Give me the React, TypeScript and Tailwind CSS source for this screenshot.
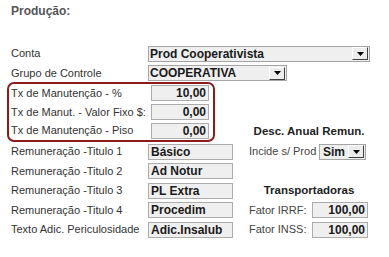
import React from 'react'

const font = { fontFamily: '"Liberation Sans", Arial, sans-serif' }

const Arrow: React.FC = () => (
  <div className="flex h-[13px] w-[16px] shrink-0 items-center justify-center border border-t-white border-l-white border-r-[#404040] border-b-[#404040] bg-[#ececec]">
    <svg width="7" height="4" viewBox="0 0 7 4">
      <path d="M0 0 H7 L3.5 4 Z" fill="#000" />
    </svg>
  </div>
)

const Select: React.FC<{ value: string; width: string }> = ({ value, width }) => (
  <div className={`flex h-[16px] shrink-0 items-center justify-between border border-[#a5a5a5] bg-[#efefef] pl-[1px] pr-[1px] ${width}`}>
    <span className="whitespace-nowrap text-[12px] font-bold leading-none text-[#1a1a1a]">{value}</span>
    <Arrow />
  </div>
)

const Field: React.FC<{ value: string; width: string; right?: boolean }> = ({ value, width, right }) => (
  <div
    className={`flex h-[16px] shrink-0 items-center whitespace-nowrap border border-[#acacac] bg-[#efefef] px-[2px] text-[12px] font-bold leading-none text-[#1a1a1a] ${width} ${
      right ? 'justify-end' : 'justify-start'
    }`}
  >
    {value}
  </div>
)

const Row: React.FC<{ label: string; children: React.ReactNode; h?: string; labelW?: string }> = ({
  label,
  children,
  h = 'h-[19.5px]',
  labelW = 'w-[137px]',
}) => (
  <div className={`flex items-center ${h}`}>
    <span className={`${labelW} shrink-0 whitespace-nowrap text-[11px] leading-none text-[#333]`}>{label}</span>
    {children}
  </div>
)

const App: React.FC = () => {
  const remuneracao = [
    ['Remuneração -Titulo 1', 'Básico'],
    ['Remuneração -Titulo 2', 'Ad Notur'],
    ['Remuneração -Titulo 3', 'PL Extra'],
    ['Remuneração -Titulo 4', 'Procedim'],
    ['Texto Adic. Periculosidade', 'Adic.Insalub'],
  ]

  return (
    <div className="h-[257px] w-[389px] overflow-hidden bg-white" style={font}>
      <div className="pl-[11px] pt-[4px] text-[12px] font-bold leading-[14px] text-[#555]">Produção:</div>

      <div className="mt-[26px] pl-[11px]">
        <Row label="Conta">
          <Select value="Prod Cooperativista" width="w-[222px]" />
        </Row>
        <Row label="Grupo de Controle">
          <Select value="COOPERATIVA" width="w-[139px]" />
        </Row>
      </div>

      <div className="flex">
        {/* left column */}
        <div className="flex w-[240px] flex-col">
          <div className="-mt-[1px] ml-[7px] h-[60px] w-[208px] rounded-[7px] border-2 border-[#8e1b1b] pl-[2px]">
            <Row label="Tx de Manutenção - %" h="h-[18.7px]" labelW="w-[140px]">
              <Field value="10,00" width="w-[58px]" right />
            </Row>
            <Row label="Tx de Manut. - Valor Fixo $:" h="h-[18.7px]" labelW="w-[140px]">
              <Field value="0,00" width="w-[58px]" right />
            </Row>
            <Row label="Tx de Manutenção - Piso" h="h-[18.7px]" labelW="w-[140px]">
              <Field value="0,00" width="w-[58px]" right />
            </Row>
          </div>

          <div className="pl-[11px]">
            {remuneracao.map(([label, value]) => (
              <Row key={label} label={label}>
                <Field value={value} width="w-[85px]" />
              </Row>
            ))}
          </div>
        </div>

        {/* right column */}
        <div className="ml-[9px] flex w-[120px] flex-col">
          <div className="h-[38px]" />
          <div className="flex h-[21px] items-center justify-center text-[11.5px] font-bold leading-none text-[#222]">
            Desc. Anual Remun.
          </div>
          <div className="flex h-[19.5px] items-center">
            <span className="w-[70px] whitespace-nowrap text-[11px] leading-none text-[#444]">Incide s/ Prod</span>
            <div className="flex h-[16px] w-[47px] items-center justify-between border border-[#a5a5a5] bg-[#efefef] pl-[3px] pr-[1px]">
              <span className="text-[12px] font-bold leading-none text-[#1a1a1a]">Sim</span>
              <Arrow />
            </div>
          </div>
          <div className="h-[19.5px]" />
          <div className="flex h-[19.5px] items-center justify-center text-[11.5px] font-bold leading-none text-[#222]">
            Transportadoras
          </div>
          <div className="flex h-[19.5px] items-center">
            <span className="w-[63px] whitespace-nowrap text-[11px] leading-none text-[#444]">Fator IRRF:</span>
            <Field value="100,00" width="w-[56px]" right />
          </div>
          <div className="flex h-[19.5px] items-center">
            <span className="w-[63px] whitespace-nowrap text-[11px] leading-none text-[#444]">Fator INSS:</span>
            <Field value="100,00" width="w-[56px]" right />
          </div>
        </div>
      </div>
    </div>
  )
}

export default App
